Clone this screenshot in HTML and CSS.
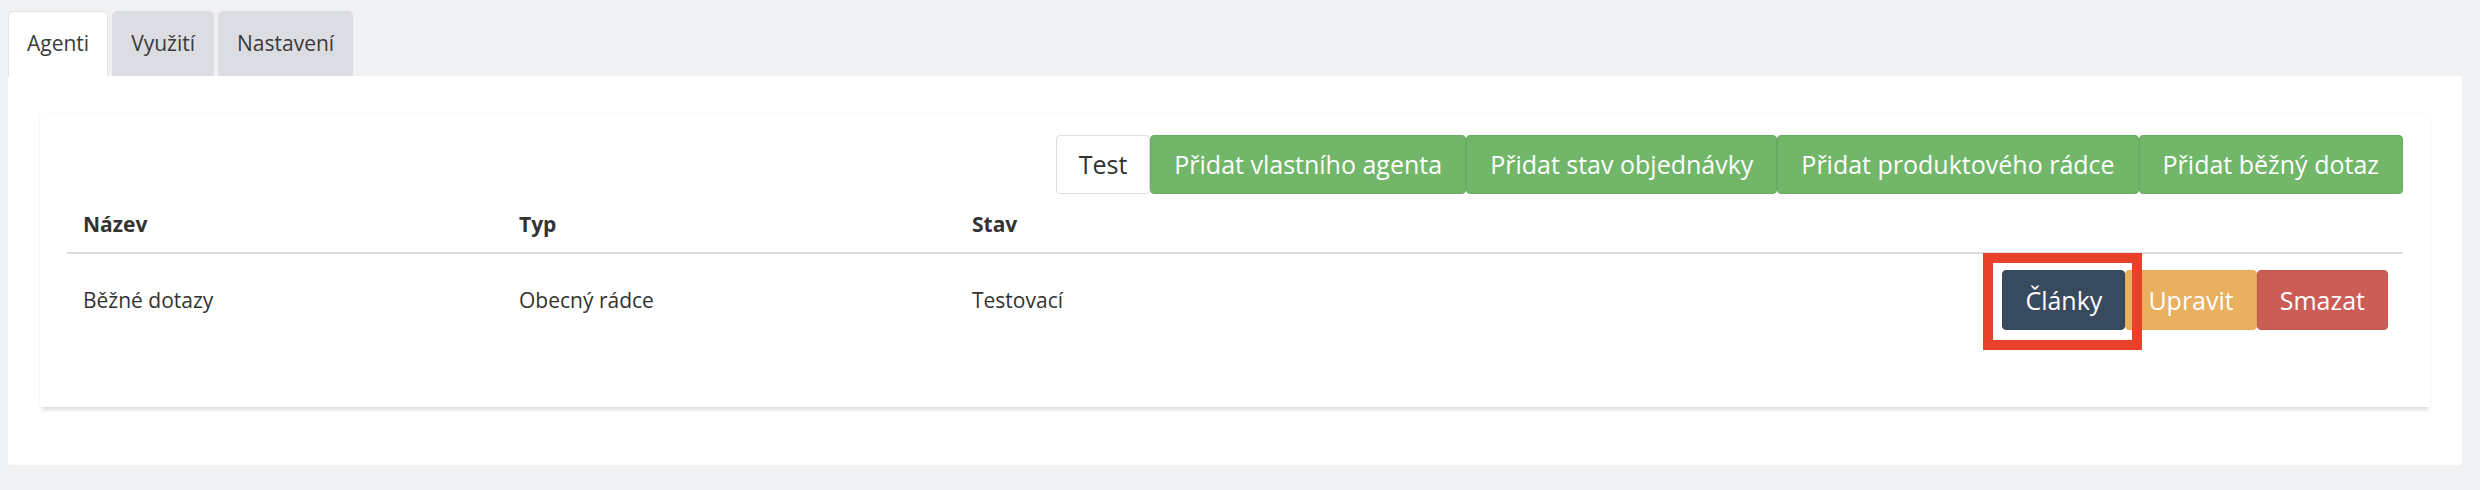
FILE: index.html
```html
<!DOCTYPE html>
<html lang="cs">
<head>
<meta charset="utf-8">
<title>Agenti</title>
<link rel="stylesheet" href="styles.css">
</head>
<body>
<div class="page">
  <ul class="tabs">
    <li class="tab active">Agenti</li>
    <li class="tab">Využití</li>
    <li class="tab">Nastavení</li>
  </ul>
  <div class="panel">
    <div class="card">
      <div class="toolbar">
        <button class="btn btn-default">Test</button>
        <button class="btn btn-green">Přidat vlastního agenta</button>
        <button class="btn btn-green">Přidat stav objednávky</button>
        <button class="btn btn-green">Přidat produktového rádce</button>
        <button class="btn btn-green">Přidat běžný dotaz</button>
      </div>
      <table class="table">
        <thead>
          <tr>
            <th class="col-name">Název</th>
            <th class="col-type">Typ</th>
            <th>Stav</th>
            <th></th>
          </tr>
        </thead>
        <tbody>
          <tr>
            <td>Běžné dotazy</td>
            <td>Obecný rádce</td>
            <td>Testovací</td>
            <td class="actions">
              <span class="highlight-wrap"><button class="btn btn-dark">Články</button><span class="highlight"></span></span><button class="btn btn-orange">Upravit</button><button class="btn btn-red">Smazat</button>
            </td>
          </tr>
        </tbody>
      </table>
    </div>
  </div>
</div>
</body>
</html>
```

FILE: styles.css
```css
* { box-sizing: border-box; }
html, body { margin: 0; padding: 0; }
body {
  background: #f1f2f4;
  font-family: "Open Sans", "Liberation Sans", sans-serif;
  color: #333;
  width: 2480px;
  height: 490px;
  overflow: hidden;
}
.page {
  padding: 11px 18px 0 8px;
}
.tabs {
  list-style: none;
  margin: 0;
  padding: 0;
  display: flex;
  gap: 4px;
  height: 65px;
}
.tab {
  font-size: 21px;
  line-height: 63px;
  padding: 0 18px;
  background: #dcdde2;
  border: 1px solid #dcdde2;
  border-bottom: none;
  border-radius: 5px 5px 0 0;
  color: #3a3a3a;
  height: 65px;
}
.tab.active {
  background: #fff;
  border-color: #e2e2e2;
  height: 66px;
  position: relative;
  z-index: 1;
}
.panel {
  background: #fff;
  height: 389px;
  border-radius: 0 4px 4px 4px;
  padding: 37px 32px 0 32px;
}
.card {
  background: #fff;
  padding: 22px 27px 32px;
  box-shadow: 0 0 2px rgba(0,0,0,0.06), 0 5px 4px -2px rgba(0,0,0,0.13);
}
.toolbar {
  display: flex;
  justify-content: flex-end;
  margin-bottom: 3px;
}
.btn {
  font-family: "Open Sans", "Liberation Sans", sans-serif;
  font-size: 25px;
  line-height: 35px;
  height: 59px;
  padding: 11px 21px;
  border: 1px solid transparent;
  border-radius: 4px;
  color: #fff;
  margin: 0;
  cursor: pointer;
}
.btn-default {
  background: #fff;
  color: #333;
  border-color: #dedede;
  padding: 11px 22px;
}
.btn-green {
  background: #72b66a;
  border-color: #69ac61;
  padding: 11px 23px;
}
.btn-dark {
  background: #374a5e;
  border-color: #334557;
  height: 60px;
  padding: 11px 22px;
}
.btn-orange {
  background: #e8b05f;
  border-color: #e2a957;
  height: 60px;
  padding: 11px 22px;
}
.btn-red {
  background: #cc5c56;
  border-color: #c4544e;
  height: 60px;
  padding: 11px 22px;
}
.table {
  width: 100%;
  border-collapse: collapse;
  margin-bottom: 30px;
  font-size: 21px;
  line-height: 30px;
}
.table th {
  text-align: left;
  font-weight: 700;
  padding: 12px 16px 13px;
  border-bottom: 2px solid #dddddd;
}
.col-name { width: 436px; }
.col-type { width: 453px; }
.table td {
  padding: 16px 16px 15px;
  vertical-align: middle;
}
.table td.actions {
  text-align: right;
  padding-right: 15px;
  white-space: nowrap;
  font-size: 0;
}
.highlight-wrap {
  position: relative;
  display: inline-block;
  vertical-align: middle;
}
.actions .btn { vertical-align: middle; }
.highlight {
  position: absolute;
  left: -19px;
  top: -17px;
  right: -17px;
  bottom: -20px;
  border: 10px solid #e8412b;
  pointer-events: none;
}
```
